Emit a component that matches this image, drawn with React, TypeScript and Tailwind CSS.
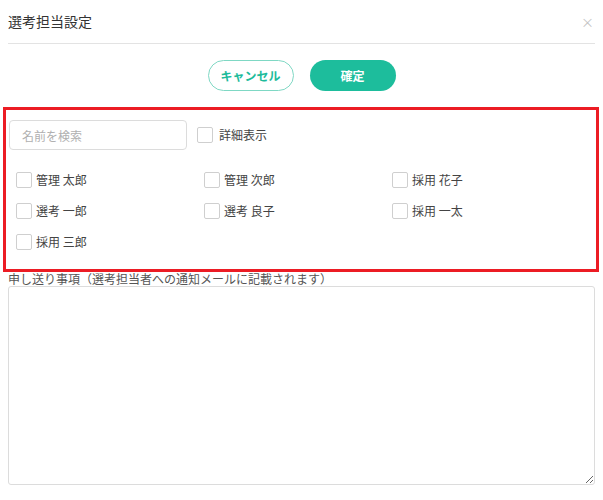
const FONT = "font-['Noto_Sans_CJK_JP','Noto_Sans',sans-serif]";

const members = [
  '管理 太郎',
  '管理 次郎',
  '採用 花子',
  '選考 一郎',
  '選考 良子',
  '採用 一太',
  '採用 三郎',
];

const Box = () => (
  <span className="block h-4 w-4 shrink-0 rounded-[2px] border border-[#cfcfcf] bg-white" />
);

export default function App() {
  return (
    <div className={`relative h-[500px] w-[603px] bg-white px-2 text-[#333] ${FONT}`}>
      {/* Header */}
      <div className="flex h-[44px] items-center justify-between border-b border-[#e3e3e3] pb-[1px]">
        <h1 className="text-[14px] font-normal leading-none text-[#333]">選考担当設定</h1>
        <span className="mr-[1px] text-[13px] leading-none text-[#c4c4c4]">×</span>
      </div>

      {/* Actions */}
      <div className="mt-4 flex justify-center gap-4">
        <button className="h-[31px] w-[86px] rounded-full border border-[#7fd8c4] bg-white text-[12px] font-bold text-[#1dbb9b]">
          キャンセル
        </button>
        <button className="h-[31px] w-[86px] rounded-full bg-[#1dbd9c] text-[12px] font-bold text-white">
          確定
        </button>
      </div>

      {/* Search + members */}
      <div className="mt-[29px] pl-[1px]">
        <div className="flex items-center gap-[10px]">
          <input
            placeholder="名前を検索"
            className="h-[30px] w-[178px] rounded-[4px] border border-[#dcdcdc] px-3 text-[12px] placeholder:text-[#b0b0b0] outline-none"
          />
          <label className="flex items-center gap-[6px] text-[12px] text-[#444]">
            <Box />
            詳細表示
          </label>
        </div>

        <div className="mt-[22px] grid grid-cols-[188px_188px_188px] gap-y-[15px] pl-[7px]">
          {members.map((m) => (
            <label key={m} className="flex h-4 items-center gap-[4px] text-[12px] text-[#444]">
              <Box />
              {m}
            </label>
          ))}
        </div>
      </div>

      {/* Notes */}
      <div className="mt-[22px]">
        <p className="text-[12px] leading-[13px] text-[#555]">申し送り事項（選考担当者への通知メールに記載されます）</p>
        <textarea className="mt-[1px] block h-[199px] w-full resize-y rounded-[3px] border border-[#dcdcdc] outline-none" />
      </div>

      {/* Highlight overlay */}
      <div className="pointer-events-none absolute left-[3px] top-[107px] h-[165px] w-[596px] border-[3px] border-[#ec1c24]" />
    </div>
  );
}
